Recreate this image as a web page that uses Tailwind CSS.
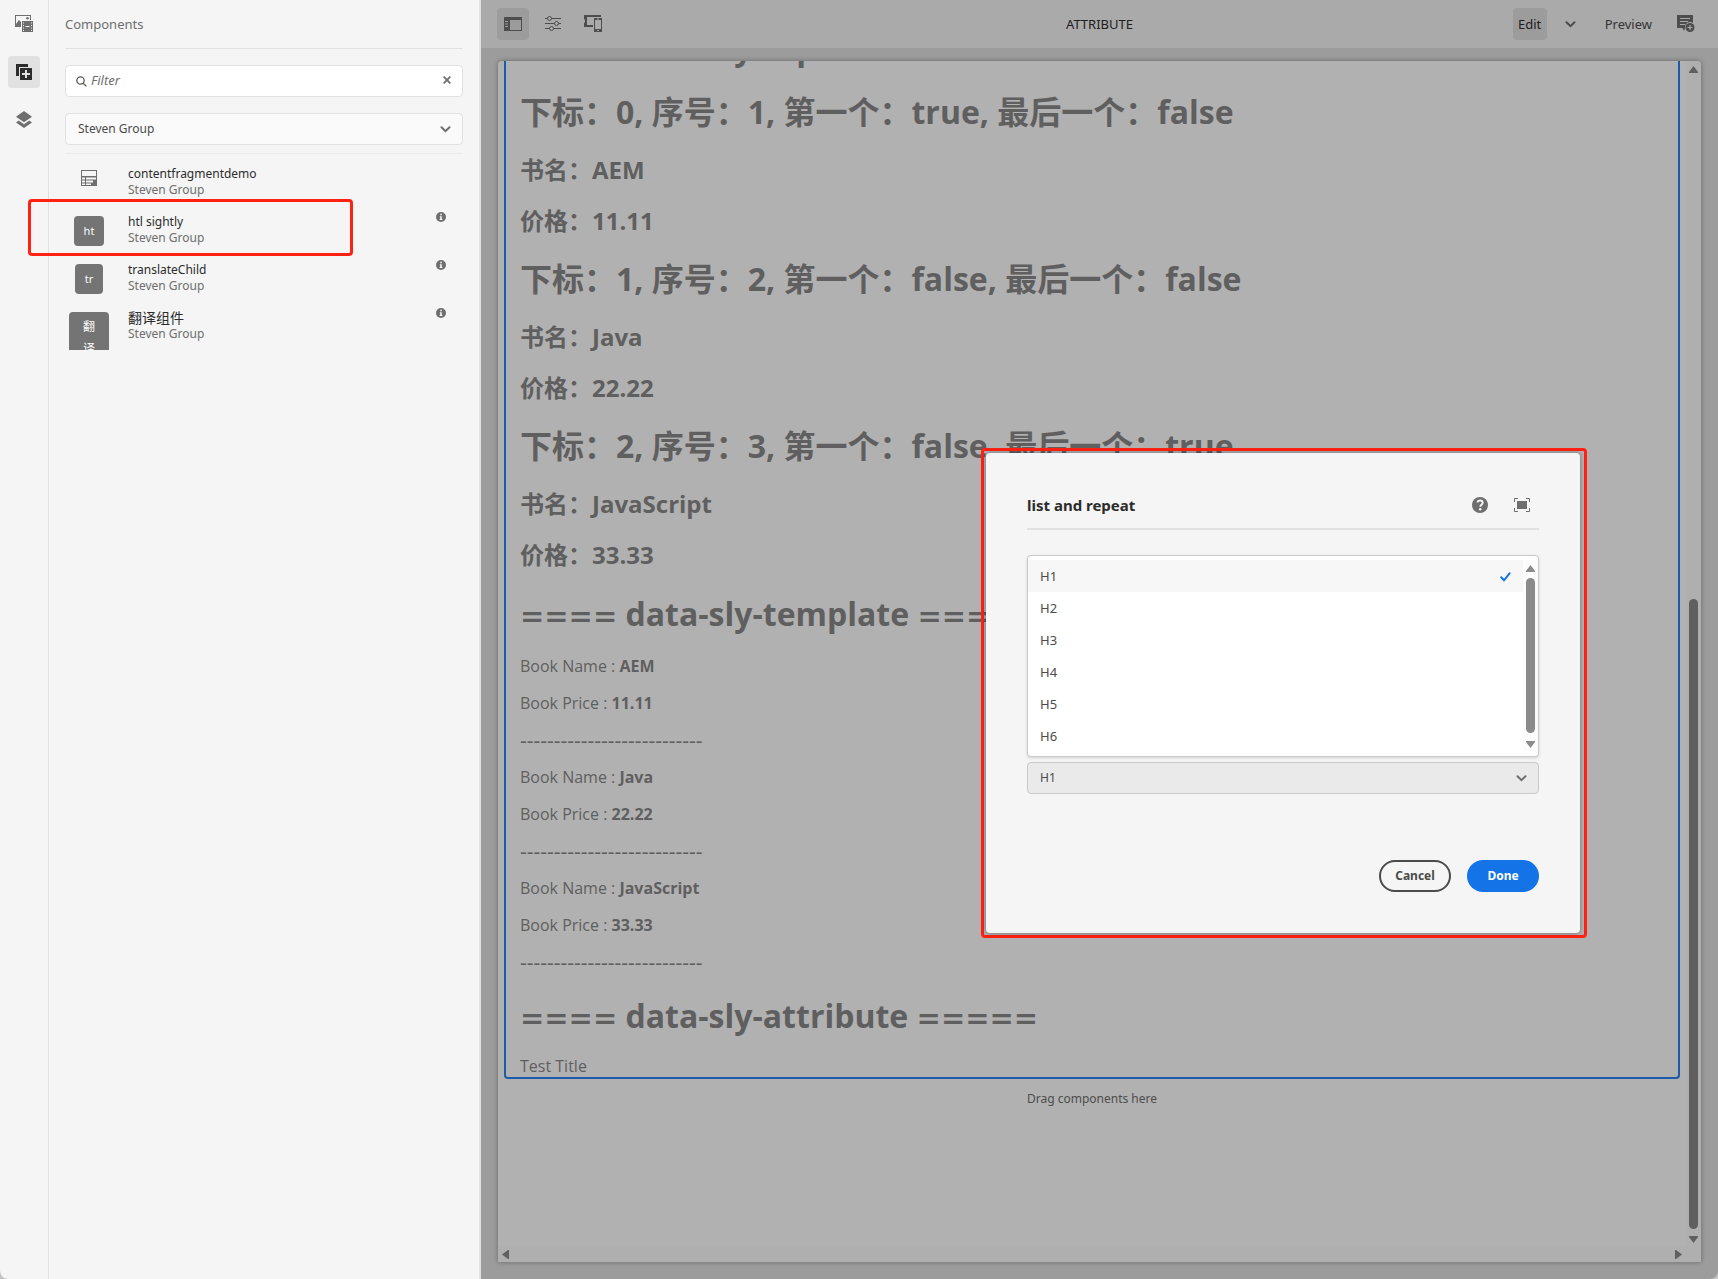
<!DOCTYPE html>
<html lang="en">
<head>
<meta charset="utf-8">
<title>ATTRIBUTE</title>
<script src="https://cdn.jsdelivr.net/npm/@tailwindcss/browser@4"></script>
</head>
<body class="bg-[#c4c4c4] font-['Noto_Sans','Noto_Sans_CJK_SC',sans-serif] text-xs leading-4 text-[#6e6e6e]">
<div class="relative flex h-screen overflow-hidden rounded-b-lg bg-[#9c9c9c]">

  <!-- Side panel -->
  <aside class="flex w-[481px] shrink-0 border-r-2 border-[#e1e1e1] bg-[#f5f5f5]">
    <nav class="flex w-[49px] shrink-0 flex-col items-center gap-4 border-r border-[#e1e1e1] pt-2" aria-label="Panels">
      <button class="flex size-8 items-center justify-center" aria-label="Assets">
        <svg class="size-[18px]" viewBox="0 0 18 18" fill="#6e6e6e"><path d="M0 0h16v5h-1V1H1v8l3-4 2 2v5H0z"/><circle cx="12.500" cy="3.300" r="1.300"/><path fill-rule="evenodd" d="M7 6h11v11H7zM8 7.500v1h1v-1zM8 10v1h1v-1zM8 12.500v1h1v-1zM8 15v1h1v-1zM16 7.500v1h1v-1zM16 10v1h1v-1zM16 12.500v1h1v-1zM16 15v1h1v-1zM10.500 11v1h4v-1z"/></svg>
      </button>
      <button class="flex size-8 items-center justify-center rounded bg-[#e1e1e1]" aria-label="Components">
        <svg class="size-4" viewBox="0 0 16 16" fill="#2c2c2c"><path d="M0 0h12v3H3v9H0z"/><path fill-rule="evenodd" d="M4 4.500a.5.5 0 0 1 .5-.5h11a.5.5 0 0 1 .5.500v11a.5.5 0 0 1-.5.500h-11a.5.5 0 0 1-.5-.500zM9 6v3H6v2h3v3h2v-3h3V9h-3V6z"/></svg>
      </button>
      <button class="flex size-8 items-center justify-center" aria-label="Content Tree">
        <svg class="h-[18px] w-4" viewBox="0 0 16 18" fill="#6e6e6e"><path d="M8 0l8 5.700-8 5.500-8-5.500z"/><path d="M2.700 9.500L0 11.600l8 5.400 8-5.400-2.700-2.100L8 13.200z"/></svg>
      </button>
    </nav>

    <div class="flex min-w-0 flex-1 flex-col px-4">
      <h2 class="flex h-[49px] items-center border-b border-[#e1e1e1] text-[13px]">Components</h2>
      <div class="relative mt-4">
        <label class="absolute left-[11px] top-[11px]" for="filter" aria-label="Filter components">
          <svg class="size-[11px]" viewBox="0 0 11 11" fill="none" stroke="#5a5a5a" stroke-width="1.300"><circle cx="4.500" cy="4.500" r="3.700"/><path d="M7.200 7.200l3.200 3.200"/></svg>
        </label>
        <input id="filter" type="text" placeholder="Filter" class="block h-8 w-full rounded border border-[#e1e1e1] bg-white pb-0.5 pl-[25px] pr-8 text-[13px] italic placeholder:text-[#6e6e6e]">
        <button class="absolute right-3 top-[11px] flex" aria-label="Clear filter">
          <svg class="size-2" viewBox="0 0 8 8" stroke="#6e6e6e" stroke-width="1.800"><path d="M.7.7l6.600 6.600M7.300.7L.7 7.300"/></svg>
        </button>
      </div>
      <div class="relative mt-4">
        <select aria-label="Component group" class="block h-8 w-full appearance-none rounded border border-[#e1e1e1] bg-[#fafafa] px-3 text-[#4b4b4b]"><option>Steven Group</option></select>
        <svg class="pointer-events-none absolute right-3 top-[13px] h-[7px] w-[11px]" viewBox="0 0 11 7" fill="none" stroke="#6e6e6e" stroke-width="2" stroke-linecap="round"><path d="M1.500 1.200l4 4 4-4"/></svg>
      </div>
      <ul class="mt-2 border-t border-[#eaeaea] pt-2">
        <li class="flex h-12">
          <span class="flex w-[63px] shrink-0 pl-4 pt-2">
            <svg class="size-4 shrink-0" viewBox="0 0 16 16" fill="#6e6e6e"><path fill-rule="evenodd" d="M0 0h16v16H0zM1 1v5h14V1zM1 7.500v2h3v-2zM5 7.500v2h10v-2zM1 10.500v2h3v-2zM5 10.500v2h7v-2zM1 13.500V15h3v-1.500zM5 13.500V15h5v-1.500z"/></svg>
          </span>
          <div class="flex-1 pt-1"><p class="text-[#2c2c2c]">contentfragmentdemo</p><p>Steven Group</p></div>
        </li>
        <li class="flex h-12">
          <span class="flex w-[63px] shrink-0 pl-[9px] pt-[6px]"><span class="flex size-[30px] items-center justify-center rounded bg-[#747474] text-[11px] text-white">ht</span></span>
          <div class="flex-1 pt-1"><p class="text-[#2c2c2c]">htl sightly</p><p>Steven Group</p></div>
          <button class="mr-[17px] mt-0.5 size-[10px] self-start" aria-label="Information"><svg class="size-[10px]" viewBox="0 0 10 10"><circle cx="5" cy="5" r="5" fill="#6e6e6e"/><path d="M4.200 1.800h1.600v1.400H4.200zM3.800 4.200h2v2.800h.6v1H3.600V7h.6V5.200h-.4z" fill="#f5f5f5"/></svg></button>
        </li>
        <li class="flex h-12">
          <span class="flex w-[63px] shrink-0 pl-[10px] pt-[6px]"><span class="flex h-[30px] w-7 items-center justify-center rounded bg-[#747474] text-[11px] text-white">tr</span></span>
          <div class="flex-1 pt-1"><p class="text-[#2c2c2c]">translateChild</p><p>Steven Group</p></div>
          <button class="mr-[17px] mt-0.5 size-[10px] self-start" aria-label="Information"><svg class="size-[10px]" viewBox="0 0 10 10"><circle cx="5" cy="5" r="5" fill="#6e6e6e"/><path d="M4.200 1.800h1.600v1.400H4.200zM3.800 4.200h2v2.800h.6v1H3.600V7h.6V5.200h-.4z" fill="#f5f5f5"/></svg></button>
        </li>
        <li class="flex h-12">
          <span class="flex w-[63px] shrink-0 pl-1 pt-[6px]"><span class="block h-[38px] w-10 overflow-hidden rounded-t bg-[#747474] px-[14px] pt-1 text-xs leading-[22px] text-white">翻译</span></span>
          <div class="flex-1 pt-1"><p class="text-sm leading-4 text-[#2c2c2c]">翻译组件</p><p>Steven Group</p></div>
          <button class="mr-[17px] mt-0.5 size-[10px] self-start" aria-label="Information"><svg class="size-[10px]" viewBox="0 0 10 10"><circle cx="5" cy="5" r="5" fill="#6e6e6e"/><path d="M4.200 1.800h1.600v1.400H4.200zM3.800 4.200h2v2.800h.6v1H3.600V7h.6V5.200h-.4z" fill="#f5f5f5"/></svg></button>
        </li>
      </ul>
    </div>
  </aside>

  <!-- Editor -->
  <main class="flex min-w-0 flex-1 flex-col">
    <header class="grid h-12 shrink-0 grid-cols-3 items-center bg-[#aaaaaa] px-4 text-[13px]">
      <div class="flex gap-2">
        <button class="flex size-8 items-center justify-center rounded bg-[#9c9c9c]" aria-label="Toggle Side Panel">
          <svg class="h-[14px] w-[18px]" viewBox="0 0 18 14" fill="#4d4d4d"><path fill-rule="evenodd" d="M.5 0h17a.5.5 0 0 1 .5.500v13a.5.5 0 0 1-.5.500H.5a.5.5 0 0 1-.5-.500V.5A.5.5 0 0 1 .5 0zM6 3v10h11V3zM1 4v1h3V4zM1 6.500v1h3v-1zM1 9v1h3V9z"/></svg>
        </button>
        <button class="flex size-8 items-center justify-center" aria-label="Page Information">
          <svg class="size-4" viewBox="0 0 16 16" fill="none" stroke="#4d4d4d"><path d="M0 2.500h2.500M6.500 2.500H16M0 7.500h9.500M13.500 7.500H16M0 12.500h4.500M8.500 12.500H16"/><circle cx="4.500" cy="2.500" r="2"/><circle cx="11.500" cy="7.500" r="2"/><circle cx="6.500" cy="12.500" r="2"/></svg>
        </button>
        <button class="flex size-8 items-center justify-center" aria-label="Emulator">
          <svg class="size-[18px]" viewBox="0 0 18 18" fill="#4d4d4d"><path d="M.5 0H17v2H3v8h6v2H.5a.5.5 0 0 1-.5-.500V7.500h1v-3H0V.5A.5.5 0 0 1 .5 0z"/><path fill-rule="evenodd" d="M10.500 3h7a.5.5 0 0 1 .5.500v13a.5.5 0 0 1-.5.500h-7a.5.5 0 0 1-.5-.500v-13a.5.5 0 0 1 .5-.500zM11 5v9h6V5zM13 3.500v1h2v-1zM13 15v1h2v-1z"/></svg>
        </button>
      </div>
      <h1 class="text-center text-[#202020]">ATTRIBUTE</h1>
      <div class="flex items-center justify-end">
        <button class="h-8 w-[34px] rounded bg-[#9c9c9c] text-[#202020]">Edit</button>
        <button class="flex h-8 w-12 items-center justify-center" aria-label="Select mode"><svg class="h-[7px] w-[11px]" viewBox="0 0 11 7" fill="none" stroke="#4d4d4d" stroke-width="2" stroke-linecap="round"><path d="M1.500 1.200l4 4 4-4"/></svg></button>
        <button class="h-8 px-[10px] text-[#343434]">Preview</button>
        <button class="ml-2 flex size-8 items-center justify-center" aria-label="Annotate">
          <svg class="size-[18px]" viewBox="0 0 18 18"><path d="M.5 0h15a.5.5 0 0 1 .5.500V8A5 5 0 0 0 8 12v1l-1 3-1.500-3H.5a.5.5 0 0 1-.5-.500V.5A.5.5 0 0 1 .5 0z" fill="#4d4d4d"/><path d="M3 3.500h10M3 6.500h8M3 9.500h5" stroke="#aaaaaa"/><circle cx="13" cy="12.500" r="4.500" fill="#4d4d4d"/><path d="M13 10v5M10.500 12.500h5" stroke="#aaaaaa" stroke-width="1.200"/></svg>
        </button>
      </div>
    </header>

    <div class="mx-[17px] mb-[17px] mt-[13px] flex min-h-0 flex-1 flex-col overflow-hidden rounded-t bg-[#b1b1b1] shadow-[0_0_5px_rgba(0,0,0,0.350)]">
      <div class="flex min-h-0 flex-1">
        <article class="min-w-0 flex-1 overflow-hidden px-[6px] font-['Open_Sans','Noto_Sans_CJK_SC',sans-serif] text-[#5f5f5f]">
          <div class="-mt-[46px] rounded-b border-2 border-t-0 border-[#1c5ba8] px-[14px] text-base leading-[37px]">
            <h2 class="h-[65px] text-[32px] font-bold leading-[65px]"><span class="font-['DejaVu_Sans'] text-[29px]">====</span> data-sly-repeat <span class="font-['DejaVu_Sans'] text-[29px]">=====</span></h2>
            <div class="mb-px">
              <h2 class="text-[32px] font-bold leading-[64px]">下标：0, 序号：1, 第一个：true, 最后一个：false</h2>
              <h3 class="text-2xl font-bold leading-[51px]">书名：AEM</h3>
              <h3 class="text-2xl font-bold leading-[51px]">价格：11.11</h3>
            </div>
            <div class="mb-px">
              <h2 class="text-[32px] font-bold leading-[64px]">下标：1, 序号：2, 第一个：false, 最后一个：false</h2>
              <h3 class="text-2xl font-bold leading-[51px]">书名：Java</h3>
              <h3 class="text-2xl font-bold leading-[51px]">价格：22.22</h3>
            </div>
            <div class="mb-px">
              <h2 class="text-[32px] font-bold leading-[64px]">下标：2, 序号：3, 第一个：false, 最后一个：true</h2>
              <h3 class="text-2xl font-bold leading-[51px]">书名：JavaScript</h3>
              <h3 class="text-2xl font-bold leading-[51px]">价格：33.33</h3>
            </div>
            <h2 class="h-[65px] text-[32px] font-bold leading-[65px]"><span class="font-['DejaVu_Sans'] text-[29px]">====</span> data-sly-template <span class="font-['DejaVu_Sans'] text-[29px]">=====</span></h2>
            <div class="py-0.5">
              <p>Book Name : <b>AEM</b></p>
              <p>Book Price : <b>11.11</b></p>
              <p class="h-[37px] text-[21px]">---------------------------</p>
              <p>Book Name : <b>Java</b></p>
              <p>Book Price : <b>22.22</b></p>
              <p class="h-[37px] text-[21px]">---------------------------</p>
              <p>Book Name : <b>JavaScript</b></p>
              <p>Book Price : <b>33.33</b></p>
              <p class="h-[37px] text-[21px]">---------------------------</p>
            </div>
            <h2 class="h-[65px] text-[32px] font-bold leading-[65px]"><span class="font-['DejaVu_Sans'] text-[29px]">====</span> data-sly-attribute <span class="font-['DejaVu_Sans'] text-[29px]">=====</span></h2>
            <p class="h-[29px]">Test Title</p>
          </div>
          <p class="mt-3 text-center font-['Noto_Sans',sans-serif] text-[#4d4d4d]">Drag components here</p>
        </article>
        <div class="flex w-[15px] shrink-0 flex-col items-center bg-[#afafaf] pb-[3px] pt-[5px]" aria-hidden="true">
          <svg class="h-2 w-[9px] shrink-0" viewBox="0 0 9 8" fill="#5f5f5f"><path d="M4.500 0L9 6v1H0V6z"/></svg>
          <span class="mt-auto h-[630px] w-[9px] rounded-full bg-[#5f5f5f]"></span>
          <svg class="mt-[7px] h-2 w-[9px] shrink-0" viewBox="0 0 9 8" fill="#5f5f5f"><path d="M0 0h9v1L4.500 7 0 1z"/></svg>
        </div>
      </div>
      <div class="flex h-[15px] shrink-0 items-center justify-between bg-[#afafaf] pl-1 pr-[19px]" aria-hidden="true">
        <svg class="h-[9px] w-[7px]" viewBox="0 0 7 9" fill="#5f5f5f"><path d="M7 0H6L0 4.500 6 9h1z"/></svg>
        <svg class="h-[9px] w-[7px]" viewBox="0 0 7 9" fill="#5f5f5f"><path d="M0 0h1l6 4.500L1 9H0z"/></svg>
      </div>
    </div>
  </main>

  <!-- Component dialog inside its highlight frame -->
  <div class="absolute right-[131px] top-[448px] rounded-sm border-3 border-[#ff2112] py-0.5 pl-0.5 pr-1">
    <section role="dialog" aria-labelledby="dialog-title" class="flex h-[480px] w-[594px] flex-col rounded bg-[#f5f5f5] px-[41px] shadow-[0_0_4px_rgba(0,0,0,0.400)]">
      <div class="mt-7 flex h-[49px] items-center gap-[26px] border-b-2 border-[#e1e1e1] pr-[9px]">
        <h2 id="dialog-title" class="flex-1 text-[15px] font-bold text-[#2c2c2c]">list and repeat</h2>
        <button aria-label="Help"><svg class="size-4" viewBox="0 0 16 16"><circle cx="8" cy="8" r="8" fill="#6e6e6e"/><path d="M5.500 5.500C5.700 3 10.600 2.700 10.700 5.800 10.700 7.700 8.300 7.800 8.300 9.800" fill="none" stroke="#f5f5f5" stroke-width="1.900"/><circle cx="8.200" cy="12.300" r="1.300" fill="#f5f5f5"/></svg></button>
        <button aria-label="Toggle Fullscreen"><svg class="h-[14px] w-4" viewBox="0 0 16 14"><path d="M.5 4V.5H4M12 .5h3.500V4M15.500 10v3.500H12M4 13.500H.5V10" fill="none" stroke="#6e6e6e"/><path d="M3 3h10v8H3z" fill="#6e6e6e"/></svg></button>
      </div>
      <div class="mt-[25px] flex h-[202px] rounded border border-[#cacaca] bg-white py-1 shadow-[0_1px_3px_rgba(0,0,0,0.150)]">
        <ul role="listbox" aria-label="Heading level" class="flex-1 text-[13px] leading-8 text-[#4b4b4b]">
          <li role="option" aria-selected="true" class="flex items-center justify-between bg-[#f7f7f7] px-3">H1
            <svg class="mt-0.5 h-[10px] w-[11px]" viewBox="0 0 11 10" fill="none" stroke="#1473e6" stroke-width="2" stroke-linecap="round"><path d="M1.200 5.300l2.800 3 5.600-7"/></svg></li>
          <li role="option" class="px-3">H2</li>
          <li role="option" class="px-3">H3</li>
          <li role="option" class="px-3">H4</li>
          <li role="option" class="px-3">H5</li>
          <li role="option" class="px-3">H6</li>
        </ul>
        <div class="flex w-[15px] flex-col items-center bg-[#fcfcfc] pb-1 pt-[5px]" aria-hidden="true">
          <svg class="h-[7px] w-[9px]" viewBox="0 0 9 7" fill="#8b8b8b"><path d="M4.500 0L9 6v1H0V6z"/></svg>
          <span class="mb-2 mt-[6px] w-[9px] flex-1 rounded-full bg-[#8b8b8b]"></span>
          <svg class="h-[7px] w-[9px]" viewBox="0 0 9 7" fill="#8b8b8b"><path d="M0 0h9v1L4.500 7 0 1z"/></svg>
        </div>
      </div>
      <div class="relative mt-[5px]">
        <select aria-label="Heading level" class="block h-8 w-full appearance-none rounded border border-[#cacaca] bg-[#eaeaea] px-3 text-[#4b4b4b]"><option>H1</option><option>H2</option><option>H3</option><option>H4</option><option>H5</option><option>H6</option></select>
        <svg class="pointer-events-none absolute right-3 top-[13px] h-[7px] w-[11px]" viewBox="0 0 11 7" fill="none" stroke="#6e6e6e" stroke-width="2" stroke-linecap="round"><path d="M1.500 1.200l4 4 4-4"/></svg>
      </div>
      <div class="mb-[41px] mt-auto flex justify-end gap-4 font-bold">
        <button class="h-8 w-[72px] rounded-full border-2 border-[#4b4b4b] text-[#4b4b4b]">Cancel</button>
        <button class="h-8 w-[72px] rounded-full bg-[#1473e6] text-white">Done</button>
      </div>
    </section>
  </div>

  <!-- Highlight around the selected component -->
  <div class="pointer-events-none absolute left-7 top-[199px] h-[57px] w-[325px] rounded-sm border-3 border-[#ff2112]"></div>
</div>
</body>
</html>
